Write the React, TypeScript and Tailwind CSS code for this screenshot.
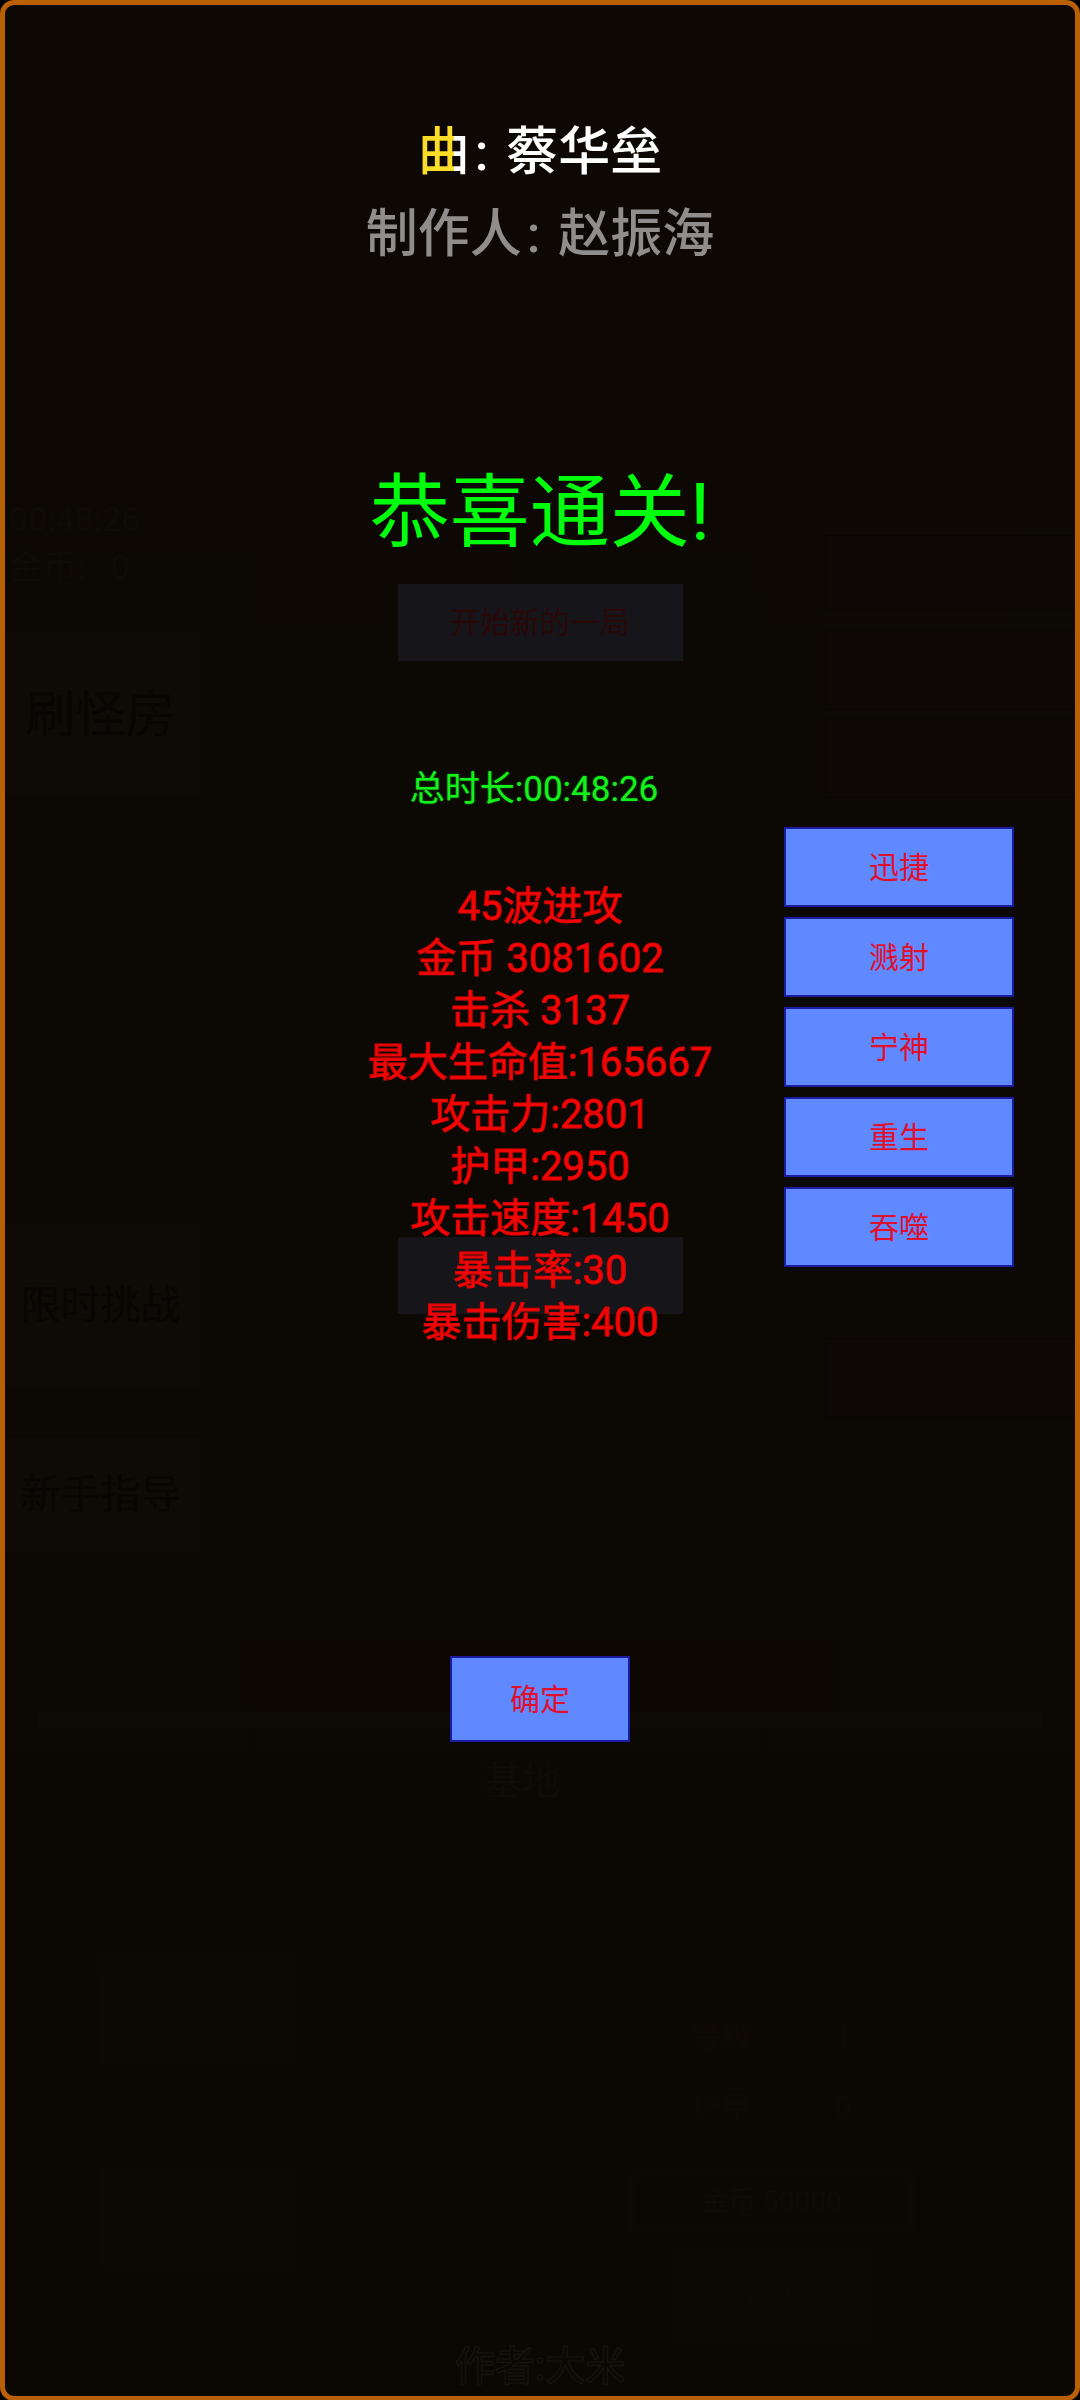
import React, { useState } from "react";

type Stat = { label: string; value: string };

const stats: Stat[] = [
  { label: "45波进攻", value: "" },
  { label: "金币 ", value: "3081602" },
  { label: "击杀 ", value: "3137" },
  { label: "最大生命值:", value: "165667" },
  { label: "攻击力:", value: "2801" },
  { label: "护甲:", value: "2950" },
  { label: "攻击速度:", value: "1450" },
  { label: "暴击率:", value: "30" },
  { label: "暴击伤害:", value: "400" },
];

const skills = ["迅捷", "溅射", "宁神", "重生", "吞噬"];

const panel = "flex w-[195px] items-center justify-center bg-[#0e0a06] pr-1 text-[#090502]";
const sideSlot = "w-full border border-[#090502] bg-[#0d0805]";

// 遮罩下面的游戏主界面
function DimmedGame() {
  return (
    <div className="col-start-1 row-start-1 flex flex-col pt-[490px]">
      <div className="grid grid-cols-[250px_1fr_250px]">
        {/* 左侧 */}
        <div className="flex flex-col text-[40px]">
          <div className="h-[138px] pl-1 text-[34px] leading-[48px] text-[#0f0b06]">
            <p>00:48:26</p>
            <p>金币: &nbsp;&nbsp;0</p>
          </div>
          <button className={`${panel} h-[164px] text-[50px]`}>刷怪房</button>
          <button className={`${panel} mt-[428px] h-[162px]`}>限时挑战</button>
          <button className={`${panel} mt-[51px] h-[114px]`}>新手指导</button>
        </div>

        {/* 中间 */}
        <div className="flex flex-col items-center pt-[89px]">
          <button className="h-[77px] w-[285px] bg-[#16151a] text-[30px] text-[#2a0808]">
            开始新的一局
          </button>
          <div className="mt-[576px] h-[77px] w-[285px] bg-[#16151a]" />
        </div>

        {/* 右侧 */}
        <div className="flex flex-col pt-10">
          <div className={`${sideSlot} h-[75px]`} />
          <div className={`${sideSlot} mt-5 h-[80px]`} />
          <div className={`${sideSlot} mt-2 h-[80px]`} />
          <div className={`${sideSlot} mt-[540px] h-[80px]`} />
        </div>
      </div>

      <div className="mx-[240px] mt-[88px] h-[68px] bg-[#0d0703]" />
      <div className="mx-8 mt-1 h-4 bg-[#0e0a06]" />
      <p className="mt-7 pr-9 text-center text-[38px] leading-[50px] text-[#0f0b06]">基地</p>

      <div className="mt-[146px] flex grow justify-between pr-[160px] pl-[95px]">
        <div className="flex flex-col gap-[100px]">
          <div className="h-[114px] w-[195px] bg-[#0c0904]" />
          <div className="h-[104px] w-[195px] bg-[#0c0904]" />
        </div>
        <div className="flex flex-col items-center pt-[50px] text-[30px] leading-[70px] text-[#0f0906]">
          <p className="flex w-[160px] justify-between">
            <span>等级</span>
            <span>1</span>
          </p>
          <p className="flex w-[160px] justify-between">
            <span>护甲</span>
            <span>0</span>
          </p>
          <div className="mt-7 h-[64px] w-[288px] border-8 border-[#0c0905] text-center text-[28px] leading-[48px] text-[#0e0b06]">
            金币:50000
          </div>
          <div className="mt-4 h-[92px] w-[200px] bg-[#0c0905] text-center text-[30px] leading-[92px]">
            升级
          </div>
        </div>
      </div>

      <p className="pb-1 text-center text-[40px] leading-[50px] font-medium text-[#0c0804] [-webkit-text-stroke:1px_#1a1512]">
        作者:大米
      </p>
    </div>
  );
}

export default function App() {
  const [open, setOpen] = useState(true);

  return (
    <div className="bg-black font-[Roboto,'Noto_Sans_CJK_SC',sans-serif]">
      <main className="grid min-h-screen grid-cols-1 overflow-hidden rounded-[14px] border-[5px] border-[#b95f05] bg-linear-to-b from-[#0d0804] to-[#0b0802]">
        <DimmedGame />

        {open && (
          <section
            role="dialog"
            aria-label="恭喜通关"
            className="col-start-1 row-start-1 flex flex-col items-center pt-[107px]"
          >
            {/* 歌词 */}
            <div className="text-center text-[52px] leading-[82px] font-medium">
              <p className="text-white">
                <span className="bg-linear-to-r from-[#fbdc28] from-70% to-white to-70% bg-clip-text text-transparent">
                  曲
                </span>
                <span className="px-[5px]">: </span>
                蔡华垒
              </p>
              <p className="text-[#8f8e8d]">
                制作人<span className="px-[5px]">: </span>
                赵振海
              </p>
            </div>

            <h1 className="mt-[189px] text-[80px] leading-[96px] text-[#00ff0c]">恭喜通关!</h1>
            <p className="mt-[209px] pr-3 text-[35px] leading-10 text-[#14f01c] text-shadow-[0_0_2px_#0a9010]">
              总时长:00:48:26
            </p>

            <div className="mt-[17px] grid w-full grid-cols-[1fr_auto_1fr]">
              <ul className="col-start-2 pt-[54px] text-center text-[40px] leading-[52px] text-[#f80404] [-webkit-text-stroke:1px_#d80404]">
                {stats.map((s) => (
                  <li key={s.label}>
                    {s.label}
                    {s.value}
                  </li>
                ))}
              </ul>
              <div className="mr-[61px] flex flex-col gap-[10px] justify-self-end">
                {skills.map((name) => (
                  <button
                    key={name}
                    className="h-[80px] w-[230px] border-2 border-[#1c1ca0] bg-[#6088ff] text-[30px] text-[#e0102c]"
                  >
                    {name}
                  </button>
                ))}
              </div>
            </div>

            <button
              onClick={() => setOpen(false)}
              className="mt-[307px] h-[86px] w-[180px] border-2 border-[#1c1ca0] bg-[#6088ff] text-[30px] text-[#e0102c]"
            >
              确定
            </button>
          </section>
        )}
      </main>
    </div>
  );
}
